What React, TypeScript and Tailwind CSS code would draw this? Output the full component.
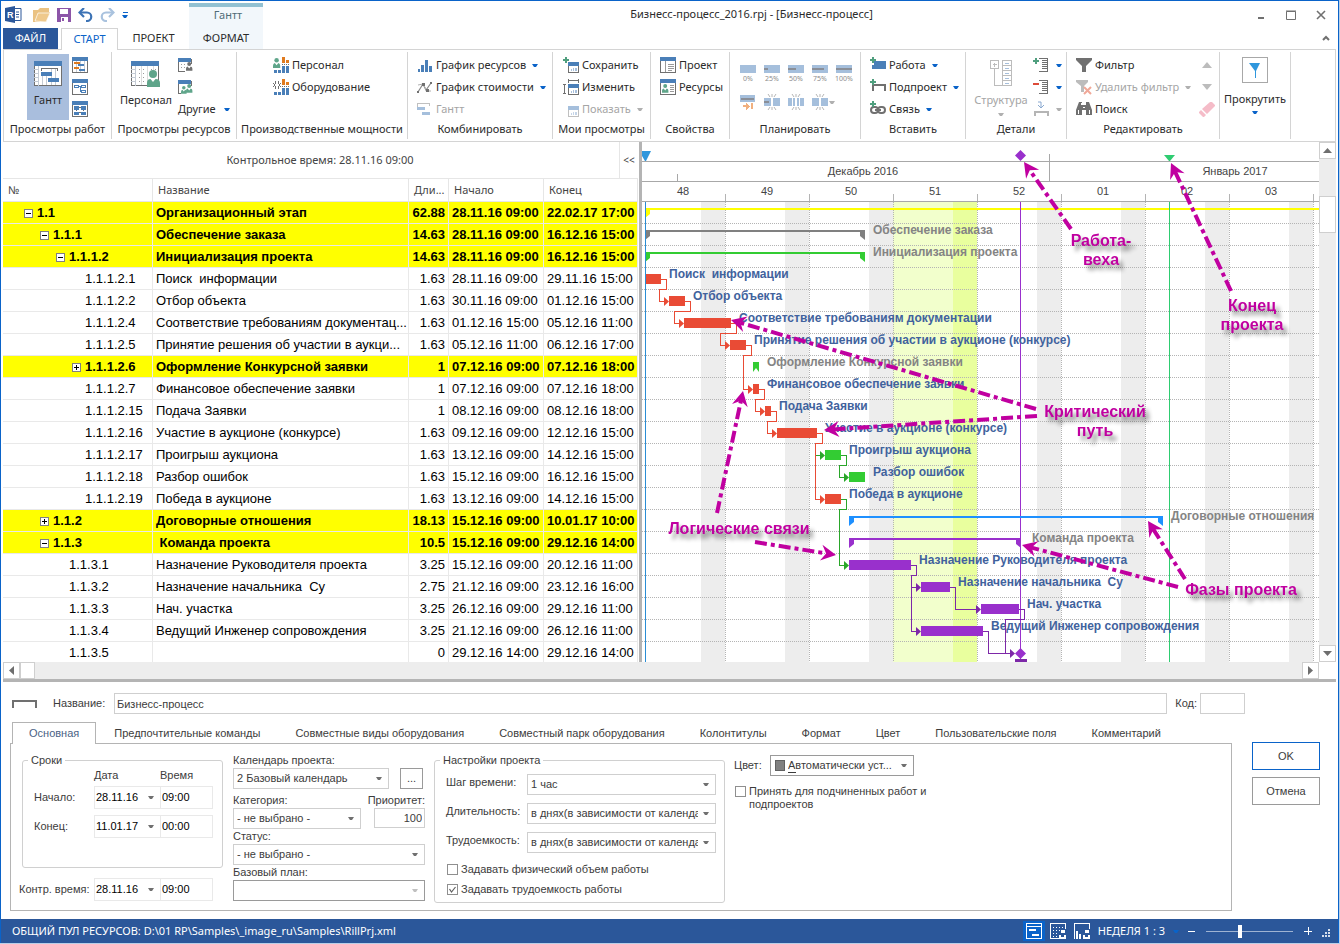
import React, { useState } from 'react';

interface Task {
  num: string;
  name: string;
  dur: string;
  start: string;
  end: string;
  level: number;
  toggle?: '+' | '-';
}

interface Bar {
  row: number;
  x1: number;
  x2: number;
  kind: 'task' | 'summary' | 'mini';
  color: string;
  label?: string;
  labelX?: number;
}

const RED = '#e94b35';
const GREEN = '#33cc33';
const LINK_GREEN = '#2aa62a';
const PURPLE = '#9930cc';
const LINK_PURPLE = '#7d28a8';
const NOTE = '#c000a0';
const BLUE = '#4a7fb8';
const GRAY = '#707070';

const TASKS: Task[] = [
  { num: '1.1', name: 'Организационный этап', dur: '62.88', start: '28.11.16 09:00', end: '22.02.17 17:00', level: 1, toggle: '-' },
  { num: '1.1.1', name: 'Обеспечение заказа', dur: '14.63', start: '28.11.16 09:00', end: '16.12.16 15:00', level: 2, toggle: '-' },
  { num: '1.1.1.2', name: 'Инициализация проекта', dur: '14.63', start: '28.11.16 09:00', end: '16.12.16 15:00', level: 3, toggle: '-' },
  { num: '1.1.1.2.1', name: 'Поиск  информации', dur: '1.63', start: '28.11.16 09:00', end: '29.11.16 15:00', level: 4 },
  { num: '1.1.1.2.2', name: 'Отбор объекта', dur: '1.63', start: '30.11.16 09:00', end: '01.12.16 15:00', level: 4 },
  { num: '1.1.1.2.4', name: 'Соответствие требованиям документац...', dur: '1.63', start: '01.12.16 15:00', end: '05.12.16 11:00', level: 4 },
  { num: '1.1.1.2.5', name: 'Принятие решения об участии в аукци...', dur: '1.63', start: '05.12.16 11:00', end: '06.12.16 17:00', level: 4 },
  { num: '1.1.1.2.6', name: 'Оформление Конкурсной заявки', dur: '1', start: '07.12.16 09:00', end: '07.12.16 18:00', level: 4, toggle: '+' },
  { num: '1.1.1.2.7', name: 'Финансовое обеспечение заявки', dur: '1', start: '07.12.16 09:00', end: '07.12.16 18:00', level: 4 },
  { num: '1.1.1.2.15', name: 'Подача Заявки', dur: '1', start: '08.12.16 09:00', end: '08.12.16 18:00', level: 4 },
  { num: '1.1.1.2.16', name: 'Участие в аукционе (конкурсе)', dur: '1.63', start: '09.12.16 09:00', end: '12.12.16 15:00', level: 4 },
  { num: '1.1.1.2.17', name: 'Проигрыш аукциона', dur: '1.63', start: '13.12.16 09:00', end: '14.12.16 15:00', level: 4 },
  { num: '1.1.1.2.18', name: 'Разбор ошибок', dur: '1.63', start: '15.12.16 09:00', end: '16.12.16 15:00', level: 4 },
  { num: '1.1.1.2.19', name: 'Победа в аукционе', dur: '1.63', start: '13.12.16 09:00', end: '14.12.16 15:00', level: 4 },
  { num: '1.1.2', name: 'Договорные отношения', dur: '18.13', start: '15.12.16 09:00', end: '10.01.17 10:00', level: 2, toggle: '+' },
  { num: '1.1.3', name: ' Команда проекта', dur: '10.5', start: '15.12.16 09:00', end: '29.12.16 14:00', level: 2, toggle: '-' },
  { num: '1.1.3.1', name: 'Назначение Руководителя проекта', dur: '3.25', start: '15.12.16 09:00', end: '20.12.16 11:00', level: 3 },
  { num: '1.1.3.2', name: 'Назначение начальника  Су', dur: '2.75', start: '21.12.16 09:00', end: '23.12.16 16:00', level: 3 },
  { num: '1.1.3.3', name: 'Нач. участка', dur: '3.25', start: '26.12.16 09:00', end: '29.12.16 11:00', level: 3 },
  { num: '1.1.3.4', name: 'Ведущий Инженер сопровождения', dur: '3.25', start: '21.12.16 09:00', end: '26.12.16 11:00', level: 3 },
  { num: '1.1.3.5', name: '', dur: '0', start: '29.12.16 14:00', end: '29.12.16 14:00', level: 3 },
];

const INDENT: Record<number, string> = { 1: 'pl-[21px]', 2: 'pl-[37px]', 3: 'pl-[53px]', 4: 'pl-[69px]' };

// Chart geometry: 12px per day, 22px per row, rows start at y = 60
const WEEK = 84;
const ROW = 22;
const TOP = 60;

const BARS: Bar[] = [
  { row: 1, x1: 3, x2: 223, kind: 'summary', color: '#808080', label: 'Обеспечение заказа', labelX: 231 },
  { row: 2, x1: 3, x2: 223, kind: 'summary', color: GREEN, label: 'Инициализация проекта', labelX: 231 },
  { row: 3, x1: 3, x2: 19, kind: 'task', color: RED, label: 'Поиск  информации', labelX: 27 },
  { row: 4, x1: 27, x2: 43, kind: 'task', color: RED, label: 'Отбор объекта', labelX: 51 },
  { row: 5, x1: 42, x2: 89, kind: 'task', color: RED, label: 'Соответствие требованиям документации', labelX: 97 },
  { row: 6, x1: 88, x2: 104, kind: 'task', color: RED, label: 'Принятие решения об участии в аукционе (конкурсе)', labelX: 112 },
  { row: 7, x1: 111, x2: 117, kind: 'mini', color: GREEN, label: 'Оформление Конкурсной заявки', labelX: 125 },
  { row: 8, x1: 111, x2: 117, kind: 'task', color: RED, label: 'Финансовое обеспечение заявки', labelX: 125 },
  { row: 9, x1: 123, x2: 129, kind: 'task', color: RED, label: 'Подача Заявки', labelX: 137 },
  { row: 10, x1: 135, x2: 175, kind: 'task', color: RED, label: 'Участие в аукционе (конкурсе)', labelX: 183 },
  { row: 11, x1: 183, x2: 199, kind: 'task', color: GREEN, label: 'Проигрыш аукциона', labelX: 207 },
  { row: 12, x1: 207, x2: 223, kind: 'task', color: GREEN, label: 'Разбор ошибок', labelX: 231 },
  { row: 13, x1: 183, x2: 199, kind: 'task', color: RED, label: 'Победа в аукционе', labelX: 207 },
  { row: 14, x1: 207, x2: 521, kind: 'summary', color: '#1e90ff', label: 'Договорные отношения', labelX: 529 },
  { row: 15, x1: 207, x2: 379, kind: 'summary', color: PURPLE, label: 'Команда проекта', labelX: 390 },
  { row: 16, x1: 207, x2: 269, kind: 'task', color: PURPLE, label: 'Назначение Руководителя проекта', labelX: 277 },
  { row: 17, x1: 279, x2: 308, kind: 'task', color: PURPLE, label: 'Назначение начальника  Су', labelX: 316 },
  { row: 18, x1: 339, x2: 377, kind: 'task', color: PURPLE, label: 'Нач. участка', labelX: 385 },
  { row: 19, x1: 279, x2: 341, kind: 'task', color: PURPLE, label: 'Ведущий Инженер сопровождения', labelX: 349 },
];

// [from row, from x, elbow x, back x, to row, to x, color]
const LINKS: [number, number, number, number, number, number, string][] = [
  [3, 19, 24, 17, 4, 27, RED],
  [4, 43, 48, 32, 5, 42, RED],
  [5, 89, 94, 78, 6, 88, RED],
  [6, 104, 109, 101, 8, 111, RED],
  [8, 117, 122, 113, 9, 123, RED],
  [9, 129, 134, 125, 10, 135, RED],
  [10, 175, 180, 173, 13, 183, RED],
  [11, 199, 204, 197, 12, 207, LINK_GREEN],
  [13, 199, 204, 197, 16, 207, LINK_GREEN],
  [16, 269, 274, 269, 19, 279, LINK_PURPLE],
  [18, 377, 382, 363, 20, 373, LINK_PURPLE],
];

// Callout arrows: tail x, tail y, tip x, tip y
const ARROWS: [number, number, number, number][] = [
  [429, 87, 382, 20],
  [589, 149, 529, 21],
  [394, 267, 89, 178],
  [395, 274, 182, 288],
  [75, 371, 101, 249],
  [113, 400, 194, 413],
  [536, 445, 380, 403],
  [543, 437, 506, 379],
];

const NOTES: { x: number; y: number; lines: string[] }[] = [
  { x: 459, y: 104, lines: ['Работа-', 'веха'] },
  { x: 610, y: 169, lines: ['Конец', 'проекта'] },
  { x: 453, y: 275, lines: ['Критический', 'путь'] },
  { x: 97, y: 392, lines: ['Логические связи'] },
  { x: 599, y: 453, lines: ['Фазы проекта'] },
];

const rowY = (row: number) => TOP + row * ROW;

function Caret({ color = '#0a63c9' }: { color?: string }) {
  return (
    <svg width="6" height="3" viewBox="0 0 6 3" className="shrink-0">
      <path d="M0 0h6L4 3H2z" fill={color} />
    </svg>
  );
}

function Icon({ size = 16, children }: { size?: number; children: React.ReactNode }) {
  return (
    <svg width={size} height={size} viewBox={`0 0 ${size} ${size}`} className="shrink-0" shapeRendering="crispEdges">
      {children}
    </svg>
  );
}

function Person({ x, y, color = '#5fa58a', s = 1 }: { x: number; y: number; color?: string; s?: number }) {
  return (
    <g transform={`translate(${x} ${y}) scale(${s})`} fill={color} shapeRendering="auto">
      <circle cx="4" cy="2.5" r="2.5" />
      <path d="M0 11V8.500q0-2.500 2-3l2 2.500 2-2.500q2 .5 2 3V11z" />
    </g>
  );
}

/* Small window frame with blue title strip */
function Frame({ children }: { children?: React.ReactNode }) {
  return (
    <>
      <rect x="0.500" y="0.500" width="15" height="15" fill="#fff" stroke={GRAY} />
      <rect width="16" height="4" fill={BLUE} />
      {children}
    </>
  );
}

function BarChartIcon({ head }: { head: React.ReactNode }) {
  return (
    <Icon>
      {head}
      <path d="M9 0h3v6H9zM13 3h3v3h-3z" fill="#e07b1f" />
      <path d="M9 7.500h7" stroke="#707070" strokeDasharray="1 1" />
      <path d="M9 9h3v7H9zM13 9h3v7h-3zM1 13h3v3H1zM5 13h3v3H5z" fill={BLUE} />
    </Icon>
  );
}

function ViewSaveIcon({ kind }: { kind: 'add' | 'edit' | 'show' }) {
  const dim = kind === 'show';
  return (
    <Icon>
      <rect x="5.500" y="5.500" width="10" height="10" fill="#fff" stroke={dim ? '#c0c0c0' : GRAY} />
      <rect x="5" y="5" width="11" height="4" fill={dim ? '#a5bfdc' : BLUE} />
      <path d="M8 12h1v2H8zM10 11h1v3h-1zM12 11h2v3h-2z" fill={dim ? '#c5d5e8' : '#a8c0dc'} />
      {kind === 'add' && <path d="M2 0h2v2h2v2H4v2H2V4H0V2h2z" fill="#4f9f7e" />}
      {kind === 'edit' && <path d="M0 5.500h3M0 14.500h3M1.500 5v10M5.500 0v4M15.500 0v4M5 1.500h11" stroke={GRAY} fill="none" />}
    </Icon>
  );
}

function ProgressIcon({ pct }: { pct: number }) {
  const label = `${pct}%`;
  return (
    <svg width="20" height="17" viewBox="0 0 20 17">
      <rect x="2" y="0" width="16" height="8" fill="#a5bfdc" />
      {pct > 0 && <rect x="2" y="3" width={(16 * pct) / 100} height="2" fill="#8a8f98" />}
      <text x="10" y="16" textAnchor="middle" fontSize="7" fill="#8c8c8c">{label}</text>
    </svg>
  );
}

function SplitIcon({ variant }: { variant: number }) {
  return (
    <Icon>
      <path d="M4 0l2 3M12 0l-2 3M8 0v3M4 16l2-3M12 16l-2-3M8 16v-3" stroke="#b5b5b5" fill="none" shapeRendering="auto" />
      <path d="M0 4h7v8H0zM9 4h7v8H9z" fill="#a5bfdc" />
      {variant === 0 && <rect y="7" width="5" height="2" fill="#8a8f98" />}
      {variant === 1 && <path d="M4 4h1v8H4zM11 4h1v8h-1z" fill="#fff" />}
    </Icon>
  );
}

function InsertIcon({ kind }: { kind: 'work' | 'sub' | 'link' }) {
  return (
    <Icon>
      {kind === 'work' && <path d="M4 4h12v8H2V8h2z" fill={BLUE} />}
      {kind === 'sub' && <path d="M2.500 12V6h12v6" stroke={GRAY} strokeWidth="2" fill="none" />}
      {kind === 'link' && (
        <g stroke={GRAY} strokeWidth="2" fill="none" shapeRendering="auto">
          <rect x="1" y="6" width="7" height="6" rx="3" />
          <rect x="8" y="6" width="7" height="6" rx="3" />
          <path d="M5 9h6" />
        </g>
      )}
      <path d="M2 0h2v2h2v2H4v2H2V4H0V2h2z" fill="#4f9f7e" />
    </Icon>
  );
}

function DetailIcon({ kind }: { kind: 'add' | 'remove' | 'sum' }) {
  return (
    <Icon>
      {kind !== 'sum' && (
        <path d="M6 1.500h9M9 3.500h6M9 5.500h6M9 7.500h6M9 9.500h6M9 11.500h6M6 14.500h9M14.500 1v14" stroke={GRAY} fill="none" />
      )}
      {kind === 'add' && <path d="M2 1h2v2h2v2H4v2H2V5H0V3h2z" fill="#4f9f7e" />}
      {kind === 'remove' && <rect y="4" width="6" height="2" fill="#dd4b39" />}
      {kind === 'sum' && (
        <>
          <path d="M1.500 15v-4h13v4" stroke="#b5b5b5" strokeWidth="2" fill="none" />
          <path d="M5 1h3v5M5 4l3 3 3-3" stroke="#8aa9d0" fill="none" shapeRendering="auto" />
        </>
      )}
    </Icon>
  );
}

interface ItemProps {
  icon: React.ReactNode;
  label: string;
  arrow?: boolean;
  disabled?: boolean;
}

function Item({ icon, label, arrow, disabled }: ItemProps) {
  return (
    <button disabled={disabled} className="flex h-[22px] items-center gap-[3px] whitespace-nowrap disabled:text-[#a5a5a5]">
      {icon}
      <span>{label}</span>
      {arrow && <span className="pl-[3px]"><Caret color={disabled ? '#b0b0b0' : undefined} /></span>}
    </button>
  );
}

function Group({ title, width, children }: { title: string; width: string; children: React.ReactNode }) {
  return (
    <div className={`my-[2px] flex shrink-0 flex-col border-r border-[#d4d4d4] pt-[2px] ${width}`}>
      <div className="flex h-[66px] items-start">{children}</div>
      <div className="flex h-5 items-center justify-center whitespace-nowrap">{title}</div>
    </div>
  );
}

function Ribbon() {
  return (
    <div className="mx-[2px] flex h-[93px] overflow-hidden border border-[#d4d4d4] text-[11px] text-[#2b2b2b]">
      <Group title="Просмотры работ" width="w-[108px]">
        <button className="ml-[23px] flex h-[66px] w-[42px] flex-col items-center gap-[5px] bg-[#a9bedd] pt-[7px]">
          <svg width="28" height="26" viewBox="0 0 28 26" shapeRendering="crispEdges">
            <rect x="0.500" y="0.500" width="27" height="24" fill="#fff" stroke={GRAY} />
            <rect width="28" height="5" fill={BLUE} />
            <path d="M4.500 5v20M0 8.500h4M0 12.500h4M0 16.500h4M0 20.500h4M8.500 12v12M12.500 12v12M17.500 8v16M21.500 8v16" stroke="#c4cbd4" fill="none" />
            <path d="M7.500 10V7.500h16V10" stroke={GRAY} fill="none" />
            <path d="M7 11h11v4H7zM14 17h11v4H14z" fill={BLUE} />
          </svg>
          <span className="leading-4">Гантт</span>
        </button>
        <div className="ml-[3px] flex flex-col gap-[6px] pt-[3px]">
          <Icon>
            <Frame>
              <path d="M4.500 4v11M8.500 4v11M12.500 4v11" stroke="#c4cbd4" />
              <path d="M2 5h6v2H2zM2 10h5v2H2z" fill="#e07b1f" />
              <path d="M6 7h6v2H6zM7 12h6v2H7z" fill={BLUE} />
            </Frame>
          </Icon>
          <Icon>
            <Frame>
              <path d="M2.500 6.500h4v2h-4zM9.500 6.500h4v2h-4zM9.500 11.500h4v2h-4zM7 7.500h2M8 7.500v5h1" stroke={BLUE} fill="none" />
            </Frame>
          </Icon>
          <Icon>
            <Frame>
              <path d="M4.500 8v2M11.500 8v2M7 6.500h2M7 11.500h2" stroke={GRAY} />
              <path d="M2 5h5v4H2zM9 5h5v4H9zM2 11h5v3H2zM9 11h5v3H9z" fill={BLUE} />
            </Frame>
          </Icon>
        </div>
      </Group>

      <Group title="Просмотры ресурсов" width="w-[125px]">
        <button className="ml-[7px] flex h-[66px] w-[54px] flex-col items-center gap-[5px] pt-[7px]">
          <svg width="30" height="26" viewBox="0 0 30 26">
            <g shapeRendering="crispEdges">
              <rect x="0.500" y="0.500" width="27" height="24" fill="#fff" stroke={GRAY} />
              <rect width="28" height="5" fill={BLUE} />
              <path d="M4.500 5v20M0 8.500h4M0 12.500h4M0 16.500h4M0 20.500h4" stroke="#c4cbd4" />
              <path d="M8 8.500h18M8 12.500h18M8 16.500h10M8 20.500h8" stroke="#9a9a9a" strokeDasharray="1 3" />
              <path d="M10.500 5v19M16.500 5v19M22.500 5v6" stroke="#dcdcdc" />
            </g>
            <circle cx="22" cy="13" r="4" fill="#5fa58a" />
            <path d="M16 26v-4q0-4 3.500-4l2.500 3 2.500-3Q29 18 29 22v4z" fill="#5fa58a" />
          </svg>
          <span className="leading-4">Персонал</span>
        </button>
        <div className="ml-[5px] flex flex-col items-start">
          <div className="flex h-[22px] items-center">
            <Icon>
              <path d="M0.500 2v12.500H7M0 2.500h13V7" stroke={GRAY} fill="none" />
              <rect y="1" width="13" height="4" fill={BLUE} />
              <path d="M3 7.500h5M3 10.500h4" stroke="#9a9a9a" strokeDasharray="1 2" />
              <Person x={8} y={5} s={0.8} color={GRAY} />
            </Icon>
          </div>
          <div className="flex h-[22px] items-center">
            <Icon>
              <path d="M0.500 2v12.500H3M0 2.500h13V7" stroke={GRAY} fill="none" />
              <rect y="1" width="13" height="4" fill={BLUE} />
              <Person x={3} y={7} s={0.7} />
              <Person x={8} y={5} s={0.8} />
            </Icon>
          </div>
          <button className="flex h-[22px] items-center gap-2">
            Другие <Caret />
          </button>
        </div>
      </Group>

      <Group title="Производственные мощности" width="w-[171px]">
        <div className="ml-9 flex flex-col items-start">
          <Item icon={<BarChartIcon head={<Person x={0} y={1} s={0.9} />} />} label="Персонал" />
          <Item
            icon={<BarChartIcon head={<path d="M0 4h8v1H0zM0 7h8v1H0zM2 2h1v8H2zM5 2h1v8H5zM1 4h6v4H1zM3 5v2h2V5z" fill={GRAY} fillRule="evenodd" />} />}
            label="Оборудование"
          />
        </div>
      </Group>

      <Group title="Комбинировать" width="w-[145px]">
        <div className="ml-[9px] flex flex-col items-start">
          <Item
            icon={<Icon><path d="M1 12h2v3H1zM4 8h3v7H4zM8 3h3v12H8zM12 9h3v6h-3z" fill={BLUE} /></Icon>}
            label="График ресурсов"
            arrow
          />
          <Item
            icon={
              <Icon>
                <path d="M1 13l5-8 3 6 5-7" stroke="#8a8a8a" strokeWidth="1.200" fill="none" shapeRendering="auto" />
                <path d="M1 6l5-1 4 7h4" stroke="#b0b0b0" fill="none" shapeRendering="auto" />
                <path d="M0 12h2v2H0zM5 4h3v3H5zM9 10h3v3H9zM13 3h2v2h-2z" fill={GRAY} />
              </Icon>
            }
            label="График стоимости"
            arrow
          />
          <Item
            disabled
            icon={
              <Icon>
                <path d="M0.500 7V2.500h12V5" stroke="#c0c0c0" fill="none" />
                <path d="M0 6h8v3H0zM5 11h8v3H5z" fill="#a5bfdc" />
              </Icon>
            }
            label="Гантт"
          />
        </div>
      </Group>

      <Group title="Мои просмотры" width="w-[98px]">
        <div className="ml-[10px] flex flex-col items-start">
          <Item icon={<ViewSaveIcon kind="add" />} label="Сохранить" />
          <Item icon={<ViewSaveIcon kind="edit" />} label="Изменить" />
          <Item icon={<ViewSaveIcon kind="show" />} label="Показать" arrow disabled />
        </div>
      </Group>

      <Group title="Свойства" width="w-[79px]">
        <div className="ml-[9px] flex flex-col items-start">
          <Item
            icon={<Icon><Frame><path d="M5.500 4v11M8 7.500h6M8 9.500h6M8 11.500h6M8 13.500h4" stroke="#9a9a9a" /></Frame></Icon>}
            label="Проект"
          />
          <Item
            icon={
              <Icon>
                <Frame>
                  <path d="M10 6.500h4M10 8.500h4M10 10.500h4M10 12.500h4" stroke="#9a9a9a" />
                  <Person x={2} y={5} s={0.8} />
                </Frame>
              </Icon>
            }
            label="Ресурсы"
          />
        </div>
      </Group>

      <Group title="Планировать" width="w-[131px]">
        <div className="ml-2 flex flex-col gap-3 pt-[11px]">
          <div className="flex gap-1">
            {[0, 25, 50, 75, 100].map(p => (
              <button key={p} aria-label={`Готовность ${p}`}><ProgressIcon pct={p} /></button>
            ))}
          </div>
          <div className="flex items-center gap-2 pl-[2px]">
            <Icon>
              <rect width="15" height="7" y="1" fill="#a5bfdc" />
              <rect x="1" y="4" width="13" height="2" fill="#8a8f98" />
              <path d="M3 12h5M12 9v6" stroke="#f0b080" strokeWidth="2" />
              <path d="M6 9l4 3-4 4z" fill="#f0b080" />
            </Icon>
            <SplitIcon variant={0} />
            <SplitIcon variant={1} />
            <div className="flex items-center gap-px">
              <SplitIcon variant={2} />
              <Caret color="#b0b0b0" />
            </div>
          </div>
        </div>
      </Group>

      <Group title="Вставить" width="w-[105px]">
        <div className="ml-[9px] flex flex-col items-start">
          <Item icon={<InsertIcon kind="work" />} label="Работа" arrow />
          <Item icon={<InsertIcon kind="sub" />} label="Подпроект" arrow />
          <Item icon={<InsertIcon kind="link" />} label="Связь" arrow />
        </div>
      </Group>

      <Group title="Детали" width="w-[101px]">
        <button disabled className="ml-[7px] flex h-[66px] w-[56px] flex-col items-center gap-[5px] pt-[6px] text-[#a5a5a5]">
          <svg width="22" height="27" viewBox="0 0 22 27" shapeRendering="crispEdges" fill="none" stroke="#bcbcbc">
            <path d="M0.500 0.500h8v8h-8zM4.500 2.500v4M2.500 4.500h4M4.500 9v16.500h7M12.500 0.500h9v25h-9zM12 5.500h9M12 10.500h9M12 15.500h9M12 20.500h9" />
            <path d="M15 3.500h4M15 8.500h4M15 13.500h4M15 18.500h4M15 23.500h4" stroke="#a5bfdc" />
          </svg>
          <span className="leading-4">Структура</span>
          <Caret color="#b0b0b0" />
        </button>
        <div className="ml-1 flex flex-col">
          {(['add', 'remove', 'sum'] as const).map(kind => (
            <button key={kind} aria-label="Детали" className="flex h-[22px] items-center gap-[7px]">
              <DetailIcon kind={kind} />
              <Caret color={kind === 'sum' ? '#b0b0b0' : undefined} />
            </button>
          ))}
        </div>
      </Group>

      <Group title="Редактировать" width="w-[153px]">
        <div className="ml-[9px] flex w-[118px] flex-col items-start">
          <Item
            icon={<Icon><path d="M0 1h16v2l-6 6v6H6V9L0 3z" fill={GRAY} shapeRendering="auto" /></Icon>}
            label="Фильтр"
          />
          <Item
            disabled
            icon={
              <Icon>
                <path d="M0 1h12v2L8 7v6H5V7L0 3z" fill="#bcbcbc" shapeRendering="auto" />
                <path d="M8 8l7 7M15 8l-7 7" stroke="#f0a898" strokeWidth="2" shapeRendering="auto" />
              </Icon>
            }
            label="Удалить фильтр"
            arrow
          />
          <Item
            icon={
              <Icon>
                <path d="M3 1h3v3h4V1h3l3 8v5h-6V9H6v5H0V9z" fill={GRAY} shapeRendering="auto" />
                <path d="M2.500 9v4M5.500 2v2M13.500 9v4M7 6.500h2" stroke="#fff" />
              </Icon>
            }
            label="Поиск"
          />
        </div>
        <div className="flex flex-1 flex-col items-center">
          <button aria-label="Вверх" className="flex h-[22px] items-center">
            <svg width="10" height="6"><path d="M0 6l5-6 5 6z" fill="#bcbcbc" /></svg>
          </button>
          <button aria-label="Вниз" className="flex h-[22px] items-center">
            <svg width="10" height="6"><path d="M0 0l5 6 5-6z" fill="#bcbcbc" /></svg>
          </button>
          <button aria-label="Очистить" className="flex h-[22px] items-center">
            <svg width="16" height="16"><path d="M0 11l2-2 5 5-2 2H4l-4-4zM3 8l8-7h2l3 3v1l-8 8z" fill="#f5bcc8" /></svg>
          </button>
        </div>
      </Group>

      <Group title="" width="w-[71px]">
        <button className="flex h-[66px] w-full flex-col items-center gap-2 pt-[3px]">
          <svg width="26" height="26" viewBox="0 0 26 26" shapeRendering="crispEdges">
            <rect x="0.500" y="0.500" width="25" height="25" fill="#fff" stroke="#a8a8a8" />
            <path d="M7 6h11l-4 8v7h-1v-7z" fill="#2f97dd" shapeRendering="auto" />
          </svg>
          <span className="leading-4">Прокрутить</span>
          <span className="-mt-1"><Caret /></span>
        </button>
      </Group>
    </div>
  );
}

function Header() {
  return (
    <header className="flex h-12 text-[11px] text-[#2b2b2b]">
      <div className="flex flex-col pl-[2px]">
        <div className="flex h-[27px] items-center gap-[7px] pl-[2px]">
          <svg width="17" height="17" viewBox="0 0 17 17">
            <path d="M8 2.500h8v12H8M11 6h3M11 8.500h3M11 11h3" fill="#fff" stroke="#2b579a" />
            <path d="M0 2l10-2v17L0 15z" fill="#2b579a" />
            <text x="2" y="12" fontSize="9" fontWeight="700" fill="#fff" fontFamily="Liberation Sans, sans-serif">R</text>
          </svg>
          <button aria-label="Открыть" className="pl-1">
            <svg width="17" height="14"><path d="M0 14V2h5l2-2h9v4h1l-4 10z" fill="#eac282" /><path d="M2 13l3-8h12l-4 9z" fill="#efc98c" stroke="#fff" strokeWidth="0.700" /></svg>
          </button>
          <button aria-label="Сохранить">
            <svg width="14" height="14"><path d="M0 0h14v14H0z" fill="#8c55a8" /><path d="M3 1h8v5H3zM4 9h7v5H4z" fill="#fff" /><path d="M5 10h2v3H5z" fill="#8c55a8" /></svg>
          </button>
          <button aria-label="Отменить">
            <svg width="15" height="14" fill="none"><path d="M2 4.500h7a4 4 0 0 1 0 8.500H8" stroke="#3c73b5" strokeWidth="2.200" /><path d="M6 0L1.500 4.500 6 9" stroke="#3c73b5" strokeWidth="2.200" /></svg>
          </button>
          <button aria-label="Вернуть">
            <svg width="15" height="14" fill="none"><path d="M13 4.500H6A4 4 0 0 0 6 13h1" stroke="#a9c2de" strokeWidth="2.200" /><path d="M9 0l4.500 4.500L9 9" stroke="#a9c2de" strokeWidth="2.200" /></svg>
          </button>
          <button aria-label="Настройка панели" className="flex flex-col items-center gap-[2px]">
            <span className="h-px w-[5px] bg-[#0a63c9]" />
            <Caret />
          </button>
        </div>
        <nav className="flex h-[21px]">
          <button className="w-[55px] bg-[#2b579a] text-white">ФАЙЛ</button>
          <button className="z-10 ml-[3px] -mb-px h-[22px] w-[57px] border border-b-0 border-[#d4d4d4] bg-white text-[#0a63c9]">СТАРТ</button>
          <button className="w-[71px]">ПРОЕКТ</button>
        </nav>
      </div>
      <div className="mt-[2px] flex w-[74px] flex-col border-t-4 border-[#92c1d2] bg-[#f2f7fb]">
        <span className="flex h-[21px] items-center justify-center pb-1 pl-1 text-[#4f6c78]">Гантт</span>
        <button className="h-[21px]">ФОРМАТ</button>
      </div>
      <div className="flex flex-1 flex-col">
        <div className="flex h-[27px] items-center">
          <h1 className="flex-1 text-center">Бизнесс-процесс_2016.rpj - [Бизнесс-процесс]</h1>
          <div className="flex w-[98px] justify-end gap-5 pr-3">
            <button aria-label="Свернуть"><svg width="10" height="10"><path d="M2 8h6" stroke={GRAY} strokeWidth="2" /></svg></button>
            <button aria-label="Развернуть"><svg width="10" height="10"><path d="M.5 1.500h9v8h-9zM0 1h10" stroke={GRAY} fill="none" /></svg></button>
            <button aria-label="Закрыть"><svg width="10" height="10"><path d="M1 1l8 8M9 1L1 9" stroke={GRAY} strokeWidth="1.600" /></svg></button>
          </div>
        </div>
        <div className="flex justify-end pt-[7px] pr-2">
          <button aria-label="Свернуть ленту"><svg width="8" height="6"><path d="M1 5l3-3 3 3" stroke={GRAY} strokeWidth="2" fill="none" /></svg></button>
        </div>
      </div>
    </header>
  );
}

function TaskTable() {
  return (
    <div className="flex w-[636px] shrink-0 flex-col overflow-hidden pr-px">
      <div className="flex h-9 shrink-0 text-[11px] text-[#444]">
        <div className="flex flex-1 items-center justify-center pl-[18px]">Контрольное время: 28.11.16 09:00</div>
        <button className="w-[19px] border-l border-[#e6e6e6] text-[10px]">&lt;&lt;</button>
      </div>
      <table className="w-full table-fixed border-separate border-spacing-0 font-['Liberation_Sans',sans-serif] text-[13px] text-black">
        <colgroup>
          <col className="w-[150px]" />
          <col />
          <col className="w-10" />
          <col className="w-[95px]" />
          <col className="w-[94px]" />
        </colgroup>
        <thead>
          <tr className="h-6 text-left font-['Noto_Sans',sans-serif] text-[11px] text-[#444] [&>th]:border-y [&>th]:border-r [&>th]:border-[#e6e6e6] [&>th]:p-0 [&>th]:pl-[5px] [&>th]:font-normal">
            <th>№</th>
            <th>Название</th>
            <th>Дли...</th>
            <th>Начало</th>
            <th>Конец</th>
          </tr>
        </thead>
        <tbody>
          {TASKS.map(t => (
            <tr
              key={t.num}
              className={`h-[22px] [&>td]:border-r [&>td]:border-b [&>td]:border-[#e9e9e9] [&>td]:p-0 [&>td]:pt-px [&>td]:leading-5 [&>td]:whitespace-pre ${
                t.toggle ? 'bg-[#ffff00] font-bold' : ''
              }`}
            >
              <td>
                <div className={`flex items-center gap-1 ${INDENT[t.level]}`}>
                  {t.toggle ? (
                    <button aria-label={t.toggle === '-' ? 'Свернуть' : 'Развернуть'} className="shrink-0">
                      <svg width="9" height="9" shapeRendering="crispEdges">
                        <path d="M.5.5h8v8h-8z" fill="#fff" stroke="#808080" />
                        <path d={t.toggle === '-' ? 'M2 4.500h5' : 'M2 4.500h5M4.500 2v5'} stroke="#000" />
                      </svg>
                    </button>
                  ) : (
                    <span className="w-[9px] shrink-0" />
                  )}
                  {t.num}
                </div>
              </td>
              <td><span className="pl-[3px]">{t.name}</span></td>
              <td className="text-right"><span className="pr-[3px]">{t.dur}</span></td>
              <td><span className="pl-[3px]">{t.start}</span></td>
              <td><span className="pl-[3px]">{t.end}</span></td>
            </tr>
          ))}
        </tbody>
      </table>
    </div>
  );
}

function BarShape({ bar }: { bar: Bar }) {
  const { x1, x2, color, kind } = bar;
  const y = rowY(bar.row) + 6;
  if (kind === 'task') return <rect x={x1} y={y} width={x2 - x1} height="10" fill={color} />;
  if (kind === 'mini') return <path d={`M${x1} ${y}H${x2}V${y + 10}L${(x1 + x2) / 2} ${y + 6}L${x1} ${y + 10}z`} fill={color} />;
  return (
    <path
      d={`M${x1} ${y}H${x2}V${y + 10}L${x2 - 5} ${y + 6}V${y + 2}H${x1 + 5}V${y + 6}L${x1} ${y + 10}z`}
      fill={color}
    />
  );
}

function ArrowTip({ x, y, color }: { x: number; y: number; color: string }) {
  return <path d={`M${x - 5} ${y - 4}L${x} ${y + 0.5}L${x - 5} ${y + 5}z`} fill={color} />;
}

function Callout({ points }: { points: [number, number, number, number] }) {
  const [x1, y1, x2, y2] = points;
  const len = Math.hypot(x2 - x1, y2 - y1);
  const ux = (x2 - x1) / len;
  const uy = (y2 - y1) / len;
  const angle = (Math.atan2(uy, ux) * 180) / Math.PI;
  return (
    <>
      <line x1={x1} y1={y1} x2={x2 - ux * 8} y2={y2 - uy * 8} stroke={NOTE} strokeWidth="4" strokeDasharray="12 4 4 4" />
      <path d="M0 0L-15 -8L-10 0L-15 8z" fill={NOTE} transform={`translate(${x2} ${y2}) rotate(${angle})`} />
    </>
  );
}

function GanttChart() {
  const weeks = ['48', '49', '50', '51', '52', '01', '02', '03'];
  return (
    <svg className="h-full min-w-0 flex-1 font-['Liberation_Sans',sans-serif]" role="img" aria-label="Диаграмма Гантта">
      {/* Calendar shading */}
      <g shapeRendering="crispEdges">
        {weeks.map((w, i) => (
          <rect key={w} x={59 + i * WEEK} y={TOP} width="24" height="460" fill="#ededed" />
        ))}
        <rect x="251" y={TOP} width="60" height="460" fill="#f2ffcc" />
        <rect x="311" y={TOP} width="24" height="460" fill="#e9ff9e" />
        {TASKS.map((t, i) => (
          <line key={t.num} x1="0" x2="100%" y1={rowY(i) + 21.5} y2={rowY(i) + 21.5} stroke="#b4b4b4" strokeDasharray="1 1" />
        ))}
        {weeks.map((w, i) => (
          <g key={w} stroke="#b4b4b4">
            <line x1={83.5 + i * WEEK} x2={83.5 + i * WEEK} y1={TOP} y2="520" strokeDasharray="1 1" />
            <line x1={83.5 + i * WEEK} x2={83.5 + i * WEEK} y1="52" y2="59" />
          </g>
        ))}
        <path d="M35.500 32v7M407.500 12v27" stroke="#a8a8a8" />
        {[19.5, 39.5, 59.5].map(y => (
          <line key={y} x1="0" x2="100%" y1={y} y2={y} stroke="#a8a8a8" />
        ))}
      </g>
      <g fontSize="11" fill="#444" textAnchor="middle">
        <text x="221" y="33">Декабрь 2016</text>
        <text x="593" y="33">Январь 2017</text>
        {weeks.map((w, i) => (
          <text key={w} x={41 + i * WEEK} y="53">{w}</text>
        ))}
      </g>

      {/* Root summary runs past the visible range */}
      <rect x="3" y="66" width="100%" height="2" fill="#ffff00" />
      <path d="M3 66h5v6l-5 4z" fill="#ffff00" />

      <g shapeRendering="crispEdges">
        <line x1="378.500" x2="378.500" y1={TOP} y2="520" stroke={PURPLE} />
        <line x1="527.500" x2="527.500" y1={TOP} y2="520" stroke="#2ecc71" />
      </g>
      <path d="M0 9h9L4 19H3L0 14z" fill="#2f97dd" />
      <path d="M378.500 8l5.500 5.500-5.500 5.500-5.500-5.500z" fill={PURPLE} />
      <path d="M522 13h11l-5 6h-1z" fill="#2ecc71" />

      {/* Labels sit under the bars and links */}
      <g fontSize="12" fontWeight="700">
        {BARS.map(b => (
          <text key={b.row} x={b.labelX} y={rowY(b.row) + 10} fill={b.kind === 'task' ? '#41629d' : '#848484'} className="whitespace-pre">
            {b.label}
          </text>
        ))}
      </g>

      <g shapeRendering="crispEdges" fill="none">
        {LINKS.map(([r1, x, ex, bx, r2, tx, color]) => (
          <path
            key={`${r1}-${r2}`}
            d={`M${x} ${rowY(r1) + 11.5}H${ex + 0.5}V${rowY(r1) + 21.5}H${bx + 0.5}V${rowY(r2) + 11.5}H${tx - 4}`}
            stroke={color}
          />
        ))}
        <path d={`M173.500 ${rowY(11) + 11.5}H180`} stroke={LINK_GREEN} />
        <path d={`M269.500 ${rowY(17) + 11.5}H276M308 ${rowY(17) + 11.5}H313.500V${rowY(18) + 11.5}H336M341 ${rowY(19) + 11.5}H346.500V${rowY(20) + 11.5}H370`} stroke={LINK_PURPLE} />
      </g>
      {BARS.map(b => <BarShape key={b.row} bar={b} />)}
      {LINKS.map(([r1, , , , r2, tx, color]) => (
        <ArrowTip key={`${r1}-${r2}`} x={tx} y={rowY(r2) + 11} color={color} />
      ))}
      <ArrowTip x={183} y={rowY(11) + 11} color={LINK_GREEN} />
      <ArrowTip x={279} y={rowY(17) + 11} color={LINK_PURPLE} />
      <ArrowTip x={339} y={rowY(18) + 11} color={LINK_PURPLE} />
      <path d="M3.500 60V520" stroke="#2a8dd4" shapeRendering="crispEdges" />
      <path d="M378.500 506l5.500 5.500-5.500 5.500-5.500-5.500z" fill={PURPLE} />
      <rect x="373" y="517" width="12" height="3" fill={LINK_PURPLE} />

      {/* Callouts */}
      {ARROWS.map(a => <Callout key={a.join()} points={a} />)}
      <g fontSize="16" fontWeight="700" fill={NOTE} textAnchor="middle">
        {NOTES.map(n => (
          <text key={n.lines[0]} className="drop-shadow-[4px_5px_2px_rgba(0,0,0,0.45)]">
            {n.lines.map((line, i) => (
              <tspan key={line} x={n.x} y={n.y + i * 19}>{line}</tspan>
            ))}
          </text>
        ))}
      </g>
    </svg>
  );
}

function ScrollButton({ label, d }: { label: string; d: string }) {
  return (
    <button aria-label={label} className="flex h-[17px] w-[17px] shrink-0 items-center justify-center border border-[#cfcfcf] bg-white">
      <svg width="9" height="9"><path d={d} fill="#6e6e6e" /></svg>
    </button>
  );
}

function Workspace() {
  return (
    <main className="mx-[2px]">
      <div className="flex h-[520px]">
        <TaskTable />
        <div className="w-[3px] shrink-0 bg-[#b4b4b4]" />
        <GanttChart />
        <div className="flex w-[17px] shrink-0 flex-col bg-[#ededed]">
          <ScrollButton label="Прокрутить вверх" d="M0 7l4.500-5 4.500 5z" />
          <div className="mt-[37px] h-[37px] border border-[#cfcfcf] bg-white" />
          <div className="flex-1" />
          <ScrollButton label="Прокрутить вниз" d="M0 2l4.500 5 4.500-5z" />
        </div>
      </div>
      <div className="flex h-[17px]">
        <div className="flex flex-1 bg-[#ededed]">
          <ScrollButton label="Прокрутить влево" d="M7 0L2 4.500 7 9z" />
          <div className="h-[17px] w-[15px] border border-[#cfcfcf] bg-white" />
          <div className="flex-1" />
          <ScrollButton label="Прокрутить вправо" d="M2 0l5 4.500L2 9z" />
        </div>
        <div className="w-[17px] shrink-0" />
      </div>
      <div className="h-[3px] bg-[#b4b4b4]" />
    </main>
  );
}

interface SelectProps {
  id: string;
  value: string;
  className?: string;
  muted?: boolean;
  dark?: boolean;
}

function Select({ id, value, className = '', muted, dark }: SelectProps) {
  return (
    <div className={`relative h-[21px] ${className}`}>
      <select
        id={id}
        className={`h-full w-full appearance-none border bg-white pr-[17px] pl-[3px] focus:outline-none ${dark ? 'border-[#9a9a9a]' : 'border-[#cfcfcf]'}`}
      >
        <option>{value}</option>
      </select>
      <span className="pointer-events-none absolute top-[9px] right-[7px] flex">
        <Caret color={muted ? '#c0c0c0' : '#707070'} />
      </span>
    </div>
  );
}

function DateTime({ id, date, time }: { id: string; date: string; time: string }) {
  return (
    <div className="flex h-[23px] w-[119px] border border-[#e9e9e9] text-black">
      <input id={id} defaultValue={date} className="w-[53px] pl-px focus:outline-none" />
      <button type="button" aria-label="Выбрать дату" className="flex w-[13px] items-center border-r border-[#e9e9e9]">
        <Caret color="#707070" />
      </button>
      <input aria-label="Время" defaultValue={time} className="w-[50px] pl-px focus:outline-none" />
    </div>
  );
}

function Check({ id, label, checked, onChange }: { id: string; label: string; checked: boolean; onChange: (v: boolean) => void }) {
  return (
    <div className="flex h-5 items-center gap-[3px]">
      <input
        id={id}
        type="checkbox"
        checked={checked}
        onChange={e => onChange(e.target.checked)}
        className="peer h-[11px] w-[11px] shrink-0 appearance-none border border-[#8f8f8f] bg-white"
      />
      <svg width="9" height="9" className="pointer-events-none -ml-[13px] hidden shrink-0 peer-checked:mr-px peer-checked:block">
        <path d="M1.500 4l2 3 4-5" stroke="#606060" strokeWidth="1.200" fill="none" />
      </svg>
      <label htmlFor={id}>{label}</label>
    </div>
  );
}

const FORM_TABS = [
  'Основная',
  'Предпочтительные команды',
  'Совместные виды оборудования',
  'Совместный парк оборудования',
  'Колонтитулы',
  'Формат',
  'Цвет',
  'Пользовательские поля',
  'Комментарий',
];

function ProjectForm() {
  const [tab, setTab] = useState('Основная');
  const [volume, setVolume] = useState(false);
  const [labor, setLabor] = useState(true);
  const [inherit, setInherit] = useState(false);

  return (
    <form onSubmit={e => e.preventDefault()} className="flex-1 pb-2 font-['Liberation_Sans',sans-serif] text-[11px] text-[#3c3c3c]">
      <div className="flex items-center pt-[11px] pl-[11px]">
        <svg width="26" height="10" className="mr-[15px] shrink-0"><path d="M1 9V2h23v7" stroke={GRAY} strokeWidth="2" fill="none" /></svg>
        <label htmlFor="name" className="w-[61px]">Название:</label>
        <input id="name" defaultValue="Бизнесс-процесс" className="h-[21px] flex-1 border border-[#cfcfcf] px-[2px] focus:outline-none" />
        <label htmlFor="code" className="mr-[3px] ml-2">Код:</label>
        <input id="code" className="mr-[93px] h-[21px] w-[45px] border border-[#cfcfcf] px-[2px] focus:outline-none" />
      </div>

      <div className="flex pr-[18px] pl-[9px]">
        <div className="flex-1">
          <div role="tablist" className="mt-2 flex h-[21px] gap-px pl-[2px]">
            {FORM_TABS.map(t => (
              <button
                key={t}
                type="button"
                role="tab"
                aria-selected={t === tab}
                onClick={() => setTab(t)}
                className={`border border-b-0 px-4 whitespace-nowrap ${
                  t === tab ? 'z-10 h-[22px] border-[#b4b4b4] bg-white text-[#4a6285]' : 'border-transparent'
                }`}
              >
                {t}
              </button>
            ))}
          </div>

          <div className="flex h-[168px] border border-[#b4b4b4] pt-[9px] pl-[11px]">
            <div className="w-[211px]">
              <fieldset className="h-[115px] w-[201px] rounded-[3px] border border-[#d0d0d0]">
                <legend className="ml-[5px] px-[3px] leading-[14px]">Сроки</legend>
                <div className="flex pl-[71px]">
                  <span className="w-[66px]">Дата</span>
                  <span>Время</span>
                </div>
                <div className="flex items-center pt-[2px]">
                  <label htmlFor="start" className="w-[71px] pl-[11px]">Начало:</label>
                  <DateTime id="start" date="28.11.16" time="09:00" />
                </div>
                <div className="flex items-center pt-[6px]">
                  <label htmlFor="end" className="w-[71px] pl-[11px]">Конец:</label>
                  <DateTime id="end" date="11.01.17" time="00:00" />
                </div>
              </fieldset>
              <div className="flex items-center pt-[10px]">
                <label htmlFor="ctrl" className="-ml-[3px] w-[75px] whitespace-nowrap">Контр. время:</label>
                <DateTime id="ctrl" date="28.11.16" time="09:00" />
              </div>
            </div>

            <div className="w-[201px] leading-[15px]">
              <label htmlFor="calendar" className="block">Календарь проекта:</label>
              <div className="mb-1 flex">
                <Select id="calendar" value="2 Базовый календарь" className="w-[156px]" />
                <button type="button" aria-label="Календари" className="ml-[11px] h-[21px] w-[23px] border border-[#9a9a9a]">...</button>
              </div>
              <div className="flex justify-between pr-[9px]">
                <div>
                  <label htmlFor="category" className="block">Категория:</label>
                  <Select id="category" value=" - не выбрано -" className="w-[128px]" />
                </div>
                <div className="flex flex-col items-end">
                  <label htmlFor="priority">Приоритет:</label>
                  <input id="priority" defaultValue="100" className="h-[20px] w-[51px] border border-[#cfcfcf] px-[2px] text-right focus:outline-none" />
                </div>
              </div>
              <label htmlFor="status" className="block">Статус:</label>
              <Select id="status" value=" - не выбрано -" className="w-[192px]" />
              <label htmlFor="baseline" className="block">Базовый план:</label>
              <Select id="baseline" value="" className="w-[192px]" muted dark />
            </div>

            <fieldset className="h-[150px] w-[291px] shrink-0 rounded-[3px] border border-[#d0d0d0]">
              <legend className="ml-[5px] px-[3px] leading-[14px]">Настройки проекта</legend>
              <div className="flex flex-col gap-2 pt-[7px] pl-[11px]">
                <div className="flex">
                  <label htmlFor="step" className="w-[81px]">Шаг времени:</label>
                  <Select id="step" value="1 час" className="w-[189px]" />
                </div>
                <div className="flex">
                  <label htmlFor="duration" className="w-[81px]">Длительность:</label>
                  <Select id="duration" value="в днях(в зависимости от календаря)" className="w-[189px]" />
                </div>
                <div className="flex">
                  <label htmlFor="labor" className="w-[81px]">Трудоемкость:</label>
                  <Select id="labor" value="в днях(в зависимости от календаря)" className="w-[189px]" />
                </div>
              </div>
              <div className="pt-[6px] pl-3">
                <Check id="useVolume" label="Задавать физический объем работы" checked={volume} onChange={setVolume} />
                <Check id="useLabor" label="Задавать трудоемкость работы" checked={labor} onChange={setLabor} />
              </div>
            </fieldset>

            <div className="pt-[2px] pl-[9px]">
              <div className="flex items-center">
                <label htmlFor="color" className="w-9">Цвет:</label>
                <div className="relative h-[21px] w-[144px]">
                  <select id="color" className="h-full w-full appearance-none border border-[#9a9a9a] bg-white pl-[17px] focus:outline-none">
                    <option>Автоматически уст...</option>
                  </select>
                  <span className="pointer-events-none absolute top-[5px] left-[5px] h-[11px] w-[10px] border border-[#606060] bg-[#808080]" />
                  <span className="pointer-events-none absolute bottom-[3px] left-[18px] h-px w-2 bg-[#3c3c3c]" />
                  <span className="pointer-events-none absolute top-[9px] right-[7px] flex"><Caret color="#707070" /></span>
                </div>
              </div>
              <div className="flex items-start gap-[3px] pt-[9px]">
                <input
                  id="inherit"
                  type="checkbox"
                  checked={inherit}
                  onChange={e => setInherit(e.target.checked)}
                  className="mt-px ml-px h-[11px] w-[11px] shrink-0 appearance-none border border-[#8f8f8f] bg-white checked:bg-[#808080]"
                />
                <label htmlFor="inherit" className="w-[180px] leading-[13px]">Принять для подчиненных работ и подпроектов</label>
              </div>
            </div>
          </div>
        </div>

        <div className="ml-5 flex w-[68px] flex-col gap-[7px] pt-7">
          <button className="h-7 border border-[#0a63c9]">OK</button>
          <button type="button" className="h-7 border border-[#9a9a9a]">Отмена</button>
        </div>
      </div>
    </form>
  );
}

function StatusBar() {
  const [zoom, setZoom] = useState(39);
  return (
    <footer className="flex h-6 items-center bg-[#2b579a] pr-[7px] pl-[11px] text-[11px] text-white">
      <span className="flex-1">ОБЩИЙ ПУЛ РЕСУРСОВ: D:\01 RP\Samples\_image_ru\Samples\RillPrj.xml</span>
      <button aria-label="Гантт" className="mr-[5px] flex h-5 w-[22px] items-center justify-center bg-[#0a63c9]">
        <Icon><path d="M.5.5h15v15H.5zM1 3.500h14" stroke="#fff" fill="none" /><path d="M3 6h7v2H3zM6 11h7v2H6z" fill="#fff" /></Icon>
      </button>
      <button aria-label="Ресурсы" className="mr-2">
        <Icon>
          <path d="M15.500 6V.5H.5v15H9" stroke="#fff" fill="none" />
          <path d="M3 4.500h11M3 7.500h7M3 10.500h6M3 13.500h6" stroke="#fff" strokeDasharray="1 2" />
          <path d="M11 7h4v3h-4zM9 12h2v2h3v-2h2v4H9z" fill="#fff" />
        </Icon>
      </button>
      <button aria-label="Загрузка" className="mr-2">
        <Icon>
          <path d="M15.500 6V.5H.5v15" stroke="#fff" fill="none" />
          <path d="M2 8h2v8H2zM5 11h2v5H5zM11 7h4v3h-4zM9 12h2v2h3v-2h2v4H9z" fill="#fff" />
        </Icon>
      </button>
      <button className="mr-[9px] flex items-center gap-2">НЕДЕЛЯ 1 : 3 <Caret /></button>
      <button aria-label="Мельче" className="h-px w-[7px] bg-white" />
      <input
        type="range"
        aria-label="Масштаб"
        value={zoom}
        onChange={e => setZoom(Number(e.target.value))}
        className="mx-[11px] h-4 w-[87px] appearance-none bg-transparent [&::-webkit-slider-runnable-track]:h-px [&::-webkit-slider-runnable-track]:bg-[#9fb3d2] [&::-webkit-slider-thumb]:-mt-[6px] [&::-webkit-slider-thumb]:h-[13px] [&::-webkit-slider-thumb]:w-1 [&::-webkit-slider-thumb]:appearance-none [&::-webkit-slider-thumb]:bg-white"
      />
      <button aria-label="Крупнее" className="mr-[10px]"><svg width="8" height="8"><path d="M0 4.500h8M4.500 0v8" stroke="#fff" /></svg></button>
      <svg width="9" height="9" className="mt-1" fill="#d5deec"><path d="M6 0h2v2H6zM3 3h2v2H3zM6 3h2v2H6zM0 6h2v2H0zM3 6h2v2H3zM6 6h2v2H6z" /></svg>
    </footer>
  );
}

export default function App() {
  return (
    <div className="min-h-screen bg-[#b9cfe8] pr-px pb-px font-['Noto_Sans',sans-serif]">
      <div className="flex min-h-[calc(100vh-1px)] flex-col border border-b-0 border-[#0a63c9] bg-white">
        <Header />
        <Ribbon />
        <Workspace />
        <ProjectForm />
        <StatusBar />
      </div>
    </div>
  );
}
